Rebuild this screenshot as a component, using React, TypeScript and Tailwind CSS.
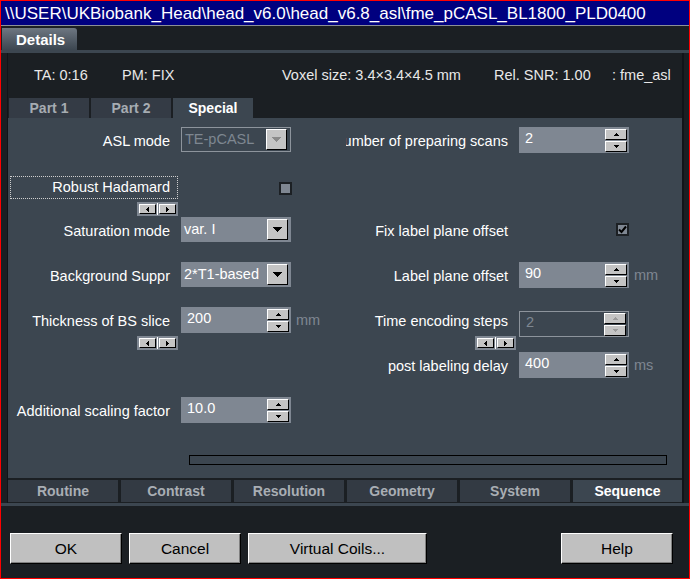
import React from "react";

const btn3d =
  "bg-[#c4c4c4] border border-t-white border-l-white border-r-black border-b-black";

function Down({ color = "#000" }: { color?: string }) {
  return (
    <svg width="9" height="5" viewBox="0 0 9 5" shapeRendering="crispEdges">
      <path d="M0 0H9L4.5 5Z" fill={color} />
    </svg>
  );
}

function SmallTri({ up, color = "#000" }: { up: boolean; color?: string }) {
  return (
    <svg width="5" height="3" viewBox="0 0 5 3" shapeRendering="crispEdges">
      {up ? <path d="M2.5 0L5 3H0Z" fill={color} /> : <path d="M0 0H5L2.5 3Z" fill={color} />}
    </svg>
  );
}

function SpinBtns({ disabled }: { disabled?: boolean }) {
  const c = disabled ? "#9a9a9a" : "#000";
  return (
    <div className="flex flex-col gap-[1px] mr-[2px]">
      <div className={`${btn3d} w-[22px] h-[11px] flex items-center justify-center`}>
        <SmallTri up color={c} />
      </div>
      <div className={`${btn3d} w-[22px] h-[11px] flex items-center justify-center`}>
        <SmallTri up={false} color={c} />
      </div>
    </div>
  );
}

function Spin({ value, disabled, unit, top }: { value: string; disabled?: boolean; unit?: string; top?: boolean }) {
  return (
    <div className={`flex items-center ${top ? "mt-[4px]" : ""}`}>
      <div
        className={`w-[110px] h-[26px] flex items-center justify-between ${
          disabled ? "border border-[#8d949c] text-[#7e8791]" : "bg-[#7f8792] text-white"
        }`}
      >
        <span className="pl-[6px] pb-[3px]">{value}</span>
        <SpinBtns disabled={disabled} />
      </div>
      {unit && <span className="ml-[5px] text-[#7f8792]">{unit}</span>}
    </div>
  );
}

function Dropdown({ value, disabled }: { value: string; disabled?: boolean }) {
  return (
    <div
      className={`w-[110px] h-[25px] flex items-center justify-between ${
        disabled ? "border border-[#8d949c] text-[#7e8791]" : "bg-[#7f8792] text-white"
      }`}
    >
      <span className="pl-[3px] whitespace-nowrap">{value}</span>
      <div className={`${btn3d} w-[21px] h-[21px] mr-[3px] flex items-center justify-center`}>
        <Down color={disabled ? "#8a8a8a" : "#000"} />
      </div>
    </div>
  );
}

function Nudge() {
  return (
    <div className="w-[41px] h-[14px] mt-[3px] bg-[#7f8792] flex items-center pl-[2px]">
      <div className={`${btn3d} w-[17px] h-[10px] flex items-center justify-center`}>
        <svg width="3" height="5" viewBox="0 0 3 5" shapeRendering="crispEdges">
          <path d="M3 0V5L0 2.5Z" fill="#000" />
        </svg>
      </div>
      <div className="w-[1px] h-[12px] bg-white ml-[1px]" />
      <div className={`${btn3d} w-[17px] h-[10px] ml-[1px] flex items-center justify-center`}>
        <svg width="3" height="5" viewBox="0 0 3 5" shapeRendering="crispEdges">
          <path d="M0 0V5L3 2.5Z" fill="#000" />
        </svg>
      </div>
    </div>
  );
}

function Check({ checked }: { checked?: boolean }) {
  return (
    <div className="w-[13px] h-[13px] border-2 border-[#1c2024] bg-[#7f8792] flex items-center justify-center">
      {checked && (
        <svg width="9" height="9" viewBox="0 0 9 9">
          <path d="M1 4.5L3.5 7L8 1.5" stroke="#000" strokeWidth="2" fill="none" />
        </svg>
      )}
    </div>
  );
}

function Row({
  label,
  children,
  nudge,
  focus,
  width,
}: {
  label?: string;
  children?: React.ReactNode;
  nudge?: boolean;
  focus?: boolean;
  width: string;
}) {
  return (
    <div className="h-[45px] flex items-start">
      <div className={`${width} flex flex-col items-end shrink-0`}>
        {label !== undefined &&
          (focus ? (
            <div className="w-full h-[23px] mt-[4px] border border-dotted border-[#cfcfcf] flex items-center justify-end pr-[7px] text-white whitespace-nowrap">
              {label}
            </div>
          ) : (
            <div className="w-full h-[26px] pt-[3px] flex items-center justify-end pr-[8px] text-white whitespace-nowrap overflow-hidden">
              <span className="shrink-0">{label}</span>
            </div>
          ))}
        {nudge && <Nudge />}
      </div>
      <div className="ml-[3px]">{children}</div>
    </div>
  );
}

function Btn({ children, w, ml }: { children: React.ReactNode; w: string; ml: string }) {
  return (
    <div
      className={`${w} ${ml} h-[31px] bg-[#c0c0c0] border border-t-white border-l-white border-r-black border-b-black shadow-[inset_-1px_-1px_0_#808080] flex items-center justify-center text-black text-[15.5px]`}
    >
      {children}
    </div>
  );
}

export default function App() {
  const title = "\\\\USER\\UKBiobank_Head\\head_v6.0\\head_v6.8_asl\\fme_pCASL_BL1800_PLD0400";
  const bottomTabs = ["Routine", "Contrast", "Resolution", "Geometry", "System", "Sequence"];
  return (
    <div className="w-[690px] h-[579px] border border-[#ff0000] bg-[#1b1f23] flex flex-col overflow-hidden font-['Liberation_Sans',Arial,sans-serif] text-[14.5px] leading-none select-none">
      <div className="h-[24px] shrink-0 bg-[#00007f] text-white text-[17px] flex items-center pl-[4px] whitespace-nowrap">
        {title}
      </div>
      <div className="h-[1px] shrink-0 bg-[#8c9096]" />
      <div className="h-[2px] shrink-0" />
      <div className="h-[22px] shrink-0 flex pl-[1px]">
        <div className="w-[75px] h-full rounded-tr-[3px] bg-gradient-to-b from-[#6e7782] to-[#3c4650] flex items-center pl-[14px] text-white text-[15px] font-bold">
          Details
        </div>
      </div>
      <div className="h-[3px] shrink-0 bg-[#3c4650]" />
      <div className="h-[450px] shrink-0 flex pl-[6px]">
        <div className="w-[677px] h-full border-l border-r-2 border-[#111418] flex flex-col">
          <div className="h-[45px] flex items-center text-[#e8e8e8] whitespace-nowrap pl-[26px]">
            <span className="w-[88px]">TA: 0:16</span>
            <span className="w-[160px]">PM: FIX</span>
            <span className="w-[212px]">Voxel size: 3.4×3.4×4.5 mm</span>
            <span className="w-[118px]">Rel. SNR: 1.00</span>
            <span>: fme_asl</span>
          </div>
          <div className="h-[20px] flex pl-[1px] gap-[2px] text-[14px] font-bold">
            <div className="w-[80px] bg-[#343b45] text-[#a6acb2] flex items-center justify-center">Part 1</div>
            <div className="w-[80px] bg-[#343b45] text-[#a6acb2] flex items-center justify-center">Part 2</div>
            <div className="w-[80px] bg-[#3c4650] text-white flex items-center justify-center">Special</div>
          </div>
          <div className="h-[360px] bg-[#3c4650] pt-[9px] flex flex-col">
            <div className="flex pl-[2px]">
              <div className="w-[336px] flex flex-col">
                <Row width="w-[168px]" label="ASL mode">
                  <Dropdown value="TE-pCASL" disabled />
                </Row>
                <Row width="w-[168px]" label="Robust Hadamard" focus nudge>
                  <div className="ml-[98px] mt-[10px]">
                    <Check />
                  </div>
                </Row>
                <Row width="w-[168px]" label="Saturation mode">
                  <Dropdown value="var. I" />
                </Row>
                <Row width="w-[168px]" label="Background Suppr">
                  <Dropdown value="2*T1-based" />
                </Row>
                <Row width="w-[168px]" label="Thickness of BS slice" nudge>
                  <Spin value="200" unit="mm" />
                </Row>
                <Row width="w-[168px]" />
                <Row width="w-[168px]" label="Additional scaling factor">
                  <Spin value="10.0" />
                </Row>
              </div>
              <div className="flex flex-col">
                <Row width="w-[170px]" label="Number of preparing scans">
                  <Spin value="2" />
                </Row>
                <Row width="w-[170px]" />
                <Row width="w-[170px]" label="Fix label plane offset">
                  <div className="ml-[97px] mt-[6px]">
                    <Check checked />
                  </div>
                </Row>
                <Row width="w-[170px]" label="Label plane offset">
                  <Spin value="90" unit="mm" />
                </Row>
                <Row width="w-[170px]" label="Time encoding steps" nudge>
                  <Spin value="2" disabled top />
                </Row>
                <Row width="w-[170px]" label="post labeling delay">
                  <Spin value="400" unit="ms" />
                </Row>
              </div>
            </div>
            <div className="ml-[181px] mt-[13px] w-[478px] h-[10px] border border-black" />
          </div>
          <div className="h-[2px]" />
          <div className="h-[22px] flex gap-[3px] text-[14px] font-bold">
            {bottomTabs.map((t, i) => (
              <div
                key={t}
                className={`${i === 5 ? "w-[109px] bg-[#3c4650] text-white" : "w-[110px] bg-[#333a43] text-[#a9aeb4]"} flex items-center justify-center`}
              >
                {t}
              </div>
            ))}
          </div>
          <div className="h-[1px]" />
        </div>
      </div>
      <div className="h-[3px] shrink-0 bg-[#3c4650]" />
      <div className="flex-1 flex items-start pt-[27px] pl-[9px]">
        <Btn w="w-[112px]" ml="ml-0">OK</Btn>
        <Btn w="w-[112px]" ml="ml-[7px]">Cancel</Btn>
        <Btn w="w-[179px]" ml="ml-[7px]">Virtual Coils...</Btn>
        <Btn w="w-[112px]" ml="ml-[134px]">Help</Btn>
      </div>
    </div>
  );
}
